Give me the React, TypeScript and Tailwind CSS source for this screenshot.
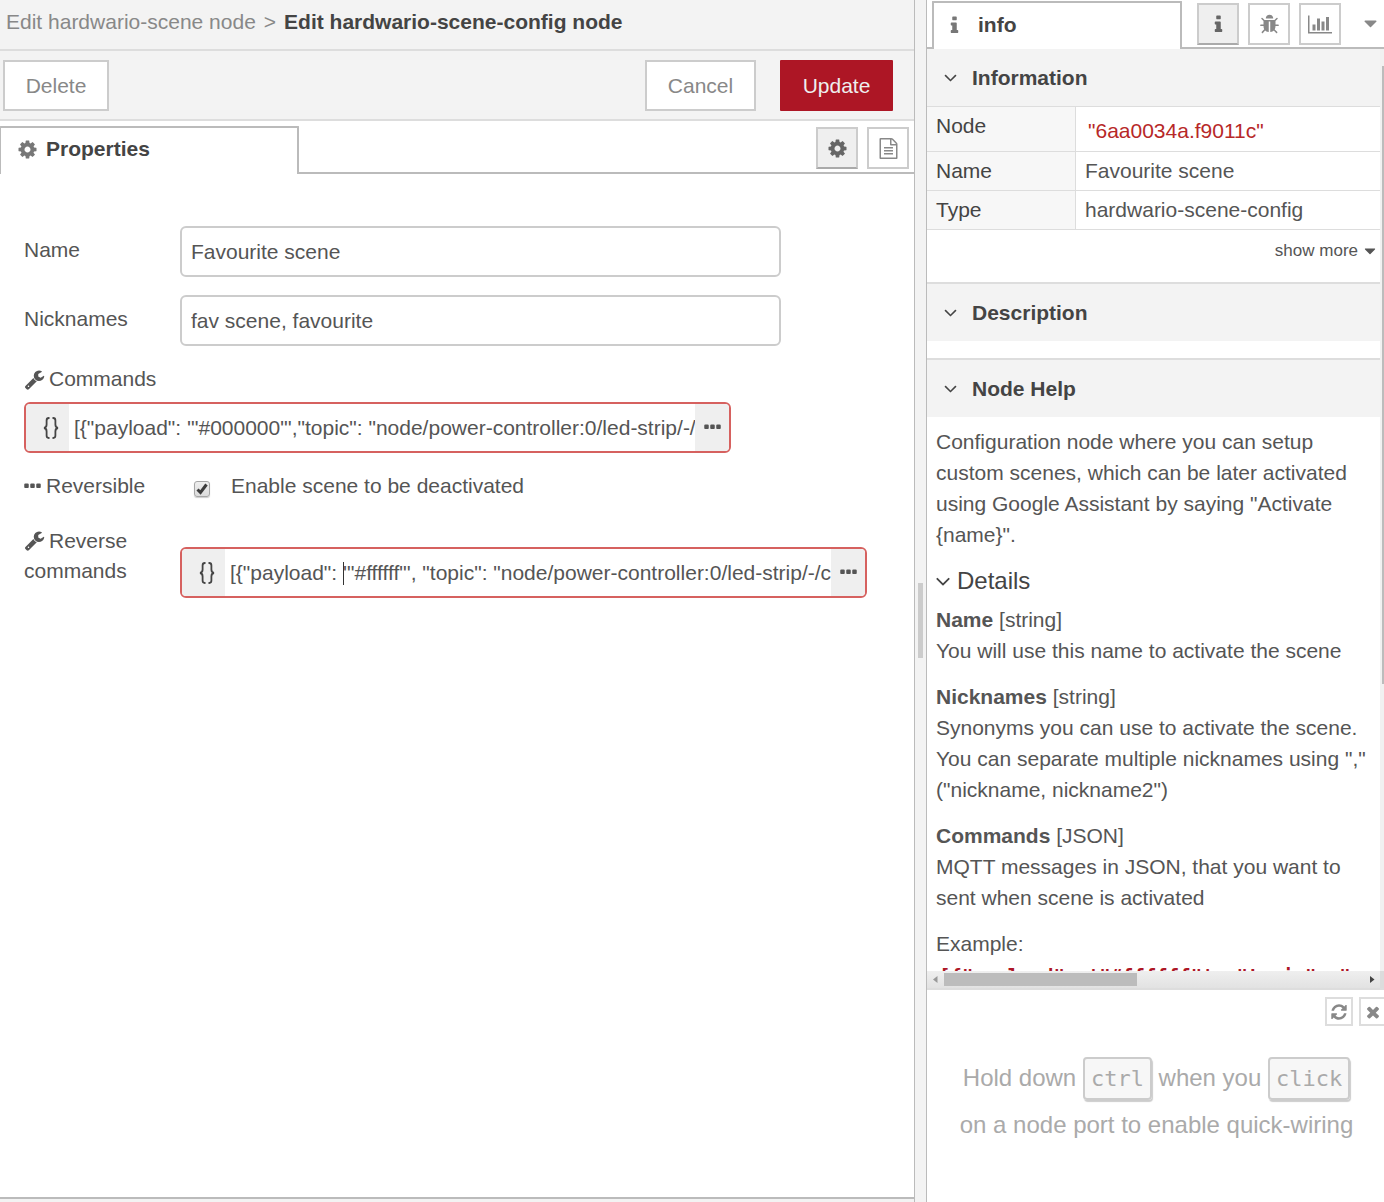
import { useState, type ReactNode } from "react";

type IconProps = { className?: string };

const PATHS = {
  cog: "M1152 896q0-106-75-181t-181-75-181 75-75 181 75 181 181 75 181-75 75-181zm512-109v222q0 12-8 23t-20 13l-185 28q-19 54-39 91 35 50 107 138 10 12 10 25t-9 23q-27 37-99 108t-94 71q-12 0-26-9l-138-108q-44 23-91 38-16 136-29 186-7 28-36 28h-222q-14 0-24.5-8.5t-11.5-21.5l-28-184q-49-16-90-37l-141 107q-10 9-25 9-14 0-25-11-126-114-165-168-7-10-7-23 0-12 8-23 15-21 51-66.5t54-70.5q-27-50-41-99l-183-27q-13-2-21-12.5t-8-23.5v-222q0-12 8-23t19-13l186-28q14-46 39-92-40-57-107-138-10-12-10-24 0-10 9-23 26-36 98.5-107.5t94.5-71.5q13 0 26 10l138 107q44-23 91-38 16-136 29-186 7-28 36-28h222q14 0 24.5 8.5t11.5 21.5l28 184q49 16 90 37l142-107q9-9 24-9 13 0 25 10 129 119 165 170 7 8 7 22 0 12-8 23-15 21-51 66.5t-54 70.5q26 50 41 98l183 28q13 2 21 12.5t8 23.5z",
  wrench:
    "M448 1472q0-26-19-45t-45-19-45 19-19 45 19 45 45 19 45-19 19-45zm644-420l-682 682q-37 37-90 37-52 0-91-37l-106-108q-38-36-38-90 0-53 38-91l681-681q39 98 114.5 173.5t173.5 114.5zm634-435q0 39-23 106-47 134-164.5 217.5t-258.5 83.5q-185 0-316.5-131.5t-131.5-316.5 131.5-316.5 316.5-131.5q58 0 121.5 16.5t107.5 46.5q16 11 16 28t-16 28l-293 169v224l193 107q5-3 79-48.5t135.5-81 70.5-35.5q15 0 23.5 10t8.5 25z",
  ellipsis:
    "M576 736v192q0 40-28 68t-68 28h-192q-40 0-68-28t-28-68v-192q0-40 28-68t68-28h192q40 0 68 28t28 68zm512 0v192q0 40-28 68t-68 28h-192q-40 0-68-28t-28-68v-192q0-40 28-68t68-28h192q40 0 68 28t28 68zm512 0v192q0 40-28 68t-68 28h-192q-40 0-68-28t-28-68v-192q0-40 28-68t68-28h192q40 0 68 28t28 68z",
  info: "M1216 1344v128q0 26-19 45t-45 19h-512q-26 0-45-19t-19-45v-128q0-26 19-45t45-19h64v-384h-64q-26 0-45-19t-19-45v-128q0-26 19-45t45-19h384q26 0 45 19t19 45v576h64q26 0 45 19t19 45zm-128-1152v192q0 26-19 45t-45 19h-256q-26 0-45-19t-19-45v-192q0-26 19-45t45-19h256q26 0 45 19t19 45z",
  bug: "M1696 960q0 26-19 45t-45 19h-224q0 171-67 290l208 209q19 19 19 45t-19 45q-18 19-45 19t-45-19l-198-197q-5 5-15 13t-42 28.5-65 36.5-82 29-97 13v-896h-128v896q-51 0-101.5-13.5t-87-33-66-39-43.5-32.5l-15-14-183 207q-20 21-48 21-24 0-43-16-19-18-20.5-44.5t15.5-46.5l202-227q-58-114-58-274h-224q-26 0-45-19t-19-45 19-45 45-19h224v-294l-173-173q-19-19-19-45t19-45 45-19 45 19l173 173h844l173-173q19-19 45-19t45 19 19 45-19 45l-173 173v294h224q26 0 45 19t19 45zm-480-576h-640q0-133 93.5-226.5t226.5-93.5 226.5 93.5 93.5 226.5z",
  file: "M1596 380q28 28 48 76t20 88v1152q0 40-28 68t-68 28h-1344q-40 0-68-28t-28-68v-1600q0-40 28-68t68-28h896q40 0 88 20t76 48zm-444-244v376h376q-10-29-22-41l-313-313q-12-12-41-22zm384 1528v-1024h-416q-40 0-68-28t-28-68v-416h-768v1536h1280zm-1024-864q0-14 9-23t23-9h704q14 0 23 9t9 23v64q0 14-9 23t-23 9h-704q-14 0-23-9t-9-23v-64zm736 224q14 0 23 9t9 23v64q0 14-9 23t-23 9h-704q-14 0-23-9t-9-23v-64q0-14 9-23t23-9h704zm0 256q14 0 23 9t9 23v64q0 14-9 23t-23 9h-704q-14 0-23-9t-9-23v-64q0-14 9-23t23-9h704z",
  refresh:
    "M1639 1056q0 5-1 7-64 268-268 434.5t-478 166.5q-146 0-282.5-55t-243.5-157l-129 129q-19 19-45 19t-45-19-19-45v-448q0-26 19-45t45-19h448q26 0 45 19t19 45-19 45l-137 137q71 66 161 102t187 36q134 0 250-65t186-179q11-17 53-117 8-23 30-23h192q13 0 22.5 9.5t9.5 22.5zm25-800v448q0 26-19 45t-45 19h-448q-26 0-45-19t-19-45 19-45l138-138q-148-137-349-137-134 0-250 65t-186 179q-11 17-53 117-8 23-30 23h-199q-13 0-22.5-9.5t-9.5-22.5v-7q65-268 270-434.5t480-166.5q146 0 284 55.5t245 156.5l130-129q19-19 45-19t45 19 19 45z",
  times:
    "M1490 1322q0 40-28 68l-136 136q-28 28-68 28t-68-28l-294-294-294 294q-28 28-68 28t-68-28l-136-136q-28-28-28-68t28-68l294-294-294-294q-28-28-28-68t28-68l136-136q28-28 68-28t68 28l294 294 294-294q28-28 68-28t68 28l136 136q28 28 28 68t-28 68l-294 294 294 294q28 28 28 68z",
  caret:
    "M1408 704q0 26-19 45l-448 448q-19 19-45 19t-45-19l-448-448q-19-19-19-45t19-45 45-19h896q26 0 45 19t19 45z",
  angle:
    "M1395 736q0 13-10 23l-466 466q-10 10-23 10t-23-10l-466-466q-10-10-10-23t10-23l50-50q10-10 23-10t23 10l393 393 393-393q10-10 23-10t23 10l50 50q10 10 10 23z",
};

function Icon({ name, className = "size-[21px]" }: { name: keyof typeof PATHS } & IconProps) {
  return (
    <svg viewBox="0 0 1792 1792" className={`shrink-0 ${className}`} fill="currentColor" aria-hidden="true">
      <path d={PATHS[name]} />
    </svg>
  );
}

function ChartIcon() {
  return (
    <svg viewBox="0 0 2048 1792" className="h-[21px] w-6" fill="currentColor" aria-hidden="true">
      <path d="M640 896v512h-256v-512h256zm384-512v1024h-256v-1024h256zm1024 1152v128h-2048v-1536h128v1408h1920zm-640-896v768h-256v-768h256zm384-384v1152h-256v-1152h256z" />
    </svg>
  );
}

function BracesIcon() {
  return (
    <svg viewBox="0 0 16 22" className="h-[22px] w-4" fill="none" stroke="#444" strokeWidth="1.8" aria-hidden="true">
      <path d="M6.500 1H5.800C4.200 1 3.600 1.800 3.600 3.400v4.200C3.600 9.600 3 10.700 1 11c2 .3 2.600 1.400 2.600 3.400v4.200C3.600 20.200 4.200 21 5.800 21h.7" />
      <path d="M9.500 1h.7c1.600 0 2.200.8 2.200 2.400v4.200c0 2 .6 3.100 2.600 3.400-2 .3-2.600 1.400-2.600 3.400v4.200c0 1.600-.6 2.400-2.200 2.400h-.7" />
    </svg>
  );
}

function SquareButton({ label, active = false, children }: { label: string; active?: boolean; children: ReactNode }) {
  return (
    <button
      type="button"
      aria-label={label}
      className={
        active
          ? "flex size-[42px] items-center justify-center border-2 border-[#ccc] border-b-[#aaa] bg-[#efefef] text-[#666]"
          : "flex size-[42px] items-center justify-center border-2 border-[#ccc] bg-white text-[#888]"
      }
    >
      {children}
    </button>
  );
}

function JsonField({ id, label, value, cursor = false }: { id: string; label: string; value: string; cursor?: boolean }) {
  const [text, setText] = useState(value);
  return (
    <div className="relative flex h-[51px] overflow-hidden rounded-md border-2 border-[#d6615f] bg-white">
      <button type="button" aria-label="JSON type" className="flex w-[43px] shrink-0 items-center justify-center bg-[#efefef] pl-[6px]">
        <BracesIcon />
      </button>
      <input
        id={id}
        aria-label={label}
        value={text}
        onChange={(e) => setText(e.target.value)}
        className="min-w-0 flex-1 pl-[5px] outline-none"
      />
      <button type="button" aria-label="Open editor" className="flex w-[34px] shrink-0 items-center justify-center bg-[#efefef]">
        <Icon name="ellipsis" />
      </button>
      {cursor && <span className="absolute top-[13px] left-[161px] h-[23px] w-px bg-[#333]" />}
    </div>
  );
}

function SectionHeader({ title }: { title: string }) {
  return (
    <h2 className="bg-[#f3f3f3]">
      <button type="button" className="flex w-full items-center gap-[11px] py-[14px] pl-[13px] text-left leading-[29px] font-bold text-[#444]">
        <Icon name="angle" />
        {title}
      </button>
    </h2>
  );
}

function Row({ label, children }: { label: string; children: ReactNode }) {
  return (
    <tr>
      <th scope="row" className="w-[149px] border-r border-b border-[#ddd] bg-[#f7f7f7] px-[9px] py-1 text-left align-top font-normal text-[#444]">
        {label}
      </th>
      <td className="border-b border-[#ddd] p-0 align-top">{children}</td>
    </tr>
  );
}

function Property({ name, type, children }: { name: string; type: string; children: ReactNode }) {
  return (
    <>
      <dt>
        <b>{name}</b> [{type}]
      </dt>
      <dd className="mb-[15px]">{children}</dd>
    </>
  );
}

function Key({ children }: { children: ReactNode }) {
  return (
    <kbd className="rounded border-2 border-[#ccc] bg-[#f7f7f7] px-1.5 py-[7px] font-['DejaVu_Sans_Mono',monospace] text-[22px] shadow-[1px_2px_1px_#ccc]">
      {children}
    </kbd>
  );
}

function EditorTray() {
  const [name, setName] = useState("Favourite scene");
  const [nicknames, setNicknames] = useState("fav scene, favourite");
  const [reversible, setReversible] = useState(true);
  const textInput = "h-[51px] w-[70%] rounded-md border-2 border-[#ccc] bg-white px-[9px] outline-none";
  return (
    <main className="flex min-w-0 flex-1 flex-col border-r border-[#bbb]">
      <nav aria-label="Breadcrumb" className="border-b-2 border-[#ddd] bg-[#f3f3f3] pb-[6px] pl-[6px] leading-[43px] whitespace-nowrap text-[#888]">
        <a href="#scene">Edit hardwario-scene node</a>
        <span className="px-2">&gt;</span>
        <b className="text-[#444]">Edit hardwario-scene-config node</b>
      </nav>
      <div className="flex justify-between border-b-2 border-[#ddd] bg-[#f3f3f3] pt-[9px] pr-[21px] pb-2 pl-[3px]">
        <button type="button" className="h-[51px] w-[106px] border-2 border-[#ccc] bg-white text-[#888]">
          Delete
        </button>
        <div className="flex gap-6">
          <button type="button" className="h-[51px] w-[111px] border-2 border-[#ccc] bg-white text-[#888]">
            Cancel
          </button>
          <button type="button" className="h-[51px] w-[113px] rounded-[1px] bg-[#ad1625] text-[#eee]">
            Update
          </button>
        </div>
      </div>
      <div className="flex pt-[5px]">
        <button type="button" className="flex h-12 w-[299px] items-center gap-2 rounded-t-[1px] border-t-2 border-r-2 border-l border-[#bbb] pb-1 pl-4 text-left font-bold text-[#444]">
          <Icon name="cog" className="size-[21px] text-[#777]" />
          Properties
        </button>
        <div className="flex flex-1 justify-end gap-[9px] border-b-2 border-[#bbb] pt-px pr-[5px]">
          <SquareButton label="Properties" active>
            <Icon name="cog" />
          </SquareButton>
          <SquareButton label="Description">
            <Icon name="file" />
          </SquareButton>
        </div>
      </div>
      <form className="flex-1 pt-[52px] pr-[31px] pl-6 leading-[30px]">
        <div className="mb-[18px] flex">
          <label htmlFor="name" className="w-[156px] shrink-0 pt-[9px]">Name</label>
          <input id="name" value={name} onChange={(e) => setName(e.target.value)} className={textInput} />
        </div>
        <div className="mb-[18px] flex">
          <label htmlFor="nicknames" className="w-[156px] shrink-0 pt-[9px]">Nicknames</label>
          <input id="nicknames" value={nicknames} onChange={(e) => setNicknames(e.target.value)} className={textInput} />
        </div>
        <label htmlFor="commands" className="mb-2 flex items-center gap-1">
          <Icon name="wrench" />
          Commands
        </label>
        <div className="w-[707px] max-w-full">
          <JsonField id="commands" label="Commands" value={`[{"payload": '"#000000"',"topic": "node/power-controller:0/led-strip/-/`} />
        </div>
        <div className="mt-[18px] flex items-center">
          <span className="flex w-[170px] shrink-0 items-center gap-[3px]">
            <Icon name="ellipsis" className="-ml-[2px] size-[21px]" />
            Reversible
          </span>
          <span className="relative mt-[6px] size-4">
            <input
              id="reversible"
              type="checkbox"
              checked={reversible}
              onChange={(e) => setReversible(e.target.checked)}
              className="block size-4 appearance-none rounded-[3px] border border-[#a6a6a6] bg-linear-to-b from-[#eee] to-[#dcdcdc] shadow-[0_1px_1px_#ccc]"
            />
            {reversible && (
              <svg viewBox="0 0 16 16" className="pointer-events-none absolute inset-0" fill="none" stroke="#3c3c3c" strokeWidth="3" aria-hidden="true">
                <path d="M3.500 8.500 6.500 11.500 12.500 3.500" />
              </svg>
            )}
          </span>
          <label htmlFor="reversible" className="pl-[21px]">Enable scene to be deactivated</label>
        </div>
        <div className="mt-[25px] flex">
          <label htmlFor="reverse" className="w-[156px] shrink-0">
            <Icon name="wrench" className="mr-1 mb-[3px] inline size-[21px]" />
            Reverse commands
          </label>
          <div className="mt-[21px] w-[80%] shrink-0">
            <JsonField id="reverse" label="Reverse commands" value={`[{"payload": '"#ffffff"', "topic": "node/power-controller:0/led-strip/-/c`} cursor />
          </div>
        </div>
      </form>
      <div className="h-[5px] shrink-0 border-t-2 border-[#bbb] bg-[#f3f3f3]" />
    </main>
  );
}

function Sidebar() {
  return (
    <aside className="flex w-[458px] shrink-0 flex-col border-l border-[#bbb]">
      <div className="flex shrink-0 pt-px">
        <div className="w-[5px] border-b-2 border-[#bbb]" />
        <button type="button" className="flex h-12 w-[250px] items-center gap-[13px] rounded-t-[1px] border-x-2 border-t-2 border-[#bbb] pb-[2px] pl-[10px] text-left font-bold text-[#444]">
          <Icon name="info" className="size-[21px] text-[#777]" />
          info
        </button>
        <div className="flex flex-1 gap-[9px] border-b-2 border-[#bbb] pt-[2px] pl-[15px]">
          <SquareButton label="Information" active>
            <Icon name="info" />
          </SquareButton>
          <SquareButton label="Debug messages">
            <Icon name="bug" />
          </SquareButton>
          <SquareButton label="Dashboard">
            <ChartIcon />
          </SquareButton>
          <button type="button" aria-label="More tabs" className="ml-[10px] h-10 text-[#888]">
            <Icon name="caret" />
          </button>
        </div>
      </div>

      <div className="flex min-h-0 flex-1">
        <div className="flex min-w-0 flex-1 flex-col">
          <div className="min-h-0 flex-1 overflow-hidden">
            <SectionHeader title="Information" />
            <table className="w-full border-separate border-spacing-0 border-t border-[#ddd] leading-[30px]">
              <tbody>
                <Row label="Node">
                  <div className="pt-[9px] pb-[5px] pl-3 text-[#b72828]">"6aa0034a.f9011c"</div>
                </Row>
                <Row label="Name">
                  <div className="px-[9px] py-1">Favourite scene</div>
                </Row>
                <Row label="Type">
                  <div className="px-[9px] py-1">hardwario-scene-config</div>
                </Row>
              </tbody>
            </table>
            <div className="flex justify-end pt-[6px] pb-4">
              <a href="#more" className="flex items-center gap-[3px] pr-px text-[17px] leading-[30px]">
                show more
                <Icon name="caret" className="size-[18px]" />
              </a>
            </div>
            <div className="mb-[17px] border-t-2 border-[#ddd]">
              <SectionHeader title="Description" />
            </div>
            <div className="border-t-2 border-[#ddd]">
              <SectionHeader title="Node Help" />
            </div>
            <div className="px-[9px] pt-[9px] leading-[31px]">
              <p>
                Configuration node where you can setup custom scenes, which can be later activated using Google Assistant by saying "Activate {"{name}"}".
              </p>
              <h3 className="mt-[15px] mb-[7px]">
                <button type="button" className="flex items-center text-2xl leading-[32px] text-[#444]">
                  <Icon name="angle" className="-ml-[5px] size-6" />
                  <span className="pl-[2px]">Details</span>
                </button>
              </h3>
              <dl>
                <Property name="Name" type="string">You will use this name to activate the scene</Property>
                <Property name="Nicknames" type="string">
                  Synonyms you can use to activate the scene. You can separate multiple nicknames using "," ("nickname, nickname2")
                </Property>
                <Property name="Commands" type="JSON">MQTT messages in JSON, that you want to sent when scene is activated</Property>
              </dl>
              <p>Example:</p>
              <code className="block pt-[2px] pl-[3px] font-['DejaVu_Sans_Mono',monospace] text-[19px] font-bold whitespace-nowrap text-[#ad1625]">
                {`[{"payload": '"#ffffff"', "topic": "`}
              </code>
            </div>
          </div>
          <div className="flex h-[17px] shrink-0 items-center bg-linear-to-b from-[#efefef] to-[#e2e2e2] text-[#444]">
            <svg viewBox="0 0 17 17" className="size-[17px]" aria-hidden="true">
              <path d="M10.500 5v7L6 8.500z" fill="#999" />
            </svg>
            <div className="h-[13px] w-[193px] bg-[#bcbcbc]" />
            <svg viewBox="0 0 17 17" className="ml-auto size-[17px]" aria-hidden="true">
              <path d="M7 5v7l4.500-3.500z" fill="#444" />
            </svg>
          </div>
        </div>
        <div className="flex w-1 shrink-0 flex-col items-end bg-[#f1f1f1] pt-[17px]">
          <div className="h-[618px] w-[2px] bg-[#bcbcbc]" />
          <div className="mt-auto h-[17px] w-1 bg-[#dcdcdc]" />
        </div>
      </div>

      <section aria-label="Tips" className="shrink-0 overflow-hidden border-t-2 border-[#ddd] pt-[7px]">
        <div className="flex justify-end gap-[6px]">
          <button type="button" aria-label="Next tip" className="flex h-[29px] w-7 items-center justify-center border-2 border-[#ddd] text-[#888]">
            <Icon name="refresh" className="size-[18px]" />
          </button>
          <button type="button" aria-label="Close tips" className="-mr-[3px] flex h-[29px] w-7 items-center justify-center border-2 border-[#ddd] text-[#888]">
            <Icon name="times" className="size-[18px]" />
          </button>
        </div>
        <p className="pt-[29px] pr-6 pb-[54px] pl-[26px] text-center text-2xl leading-[46px] text-[#aaa]">
          Hold down <Key>ctrl</Key> when you <Key>click</Key> on a node port to enable quick-wiring
        </p>
      </section>
    </aside>
  );
}

export default function App() {
  return (
    <div className="flex h-screen overflow-hidden bg-white font-['Liberation_Sans',Arial,sans-serif] text-[21px] leading-[30px] text-[#555]">
      <EditorTray />
      <div className="flex w-[11px] shrink-0 items-center justify-center bg-[#f3f3f3]">
        <div className="mt-[39px] h-[75px] w-[5px] bg-[#ccc]" />
      </div>
      <Sidebar />
    </div>
  );
}
